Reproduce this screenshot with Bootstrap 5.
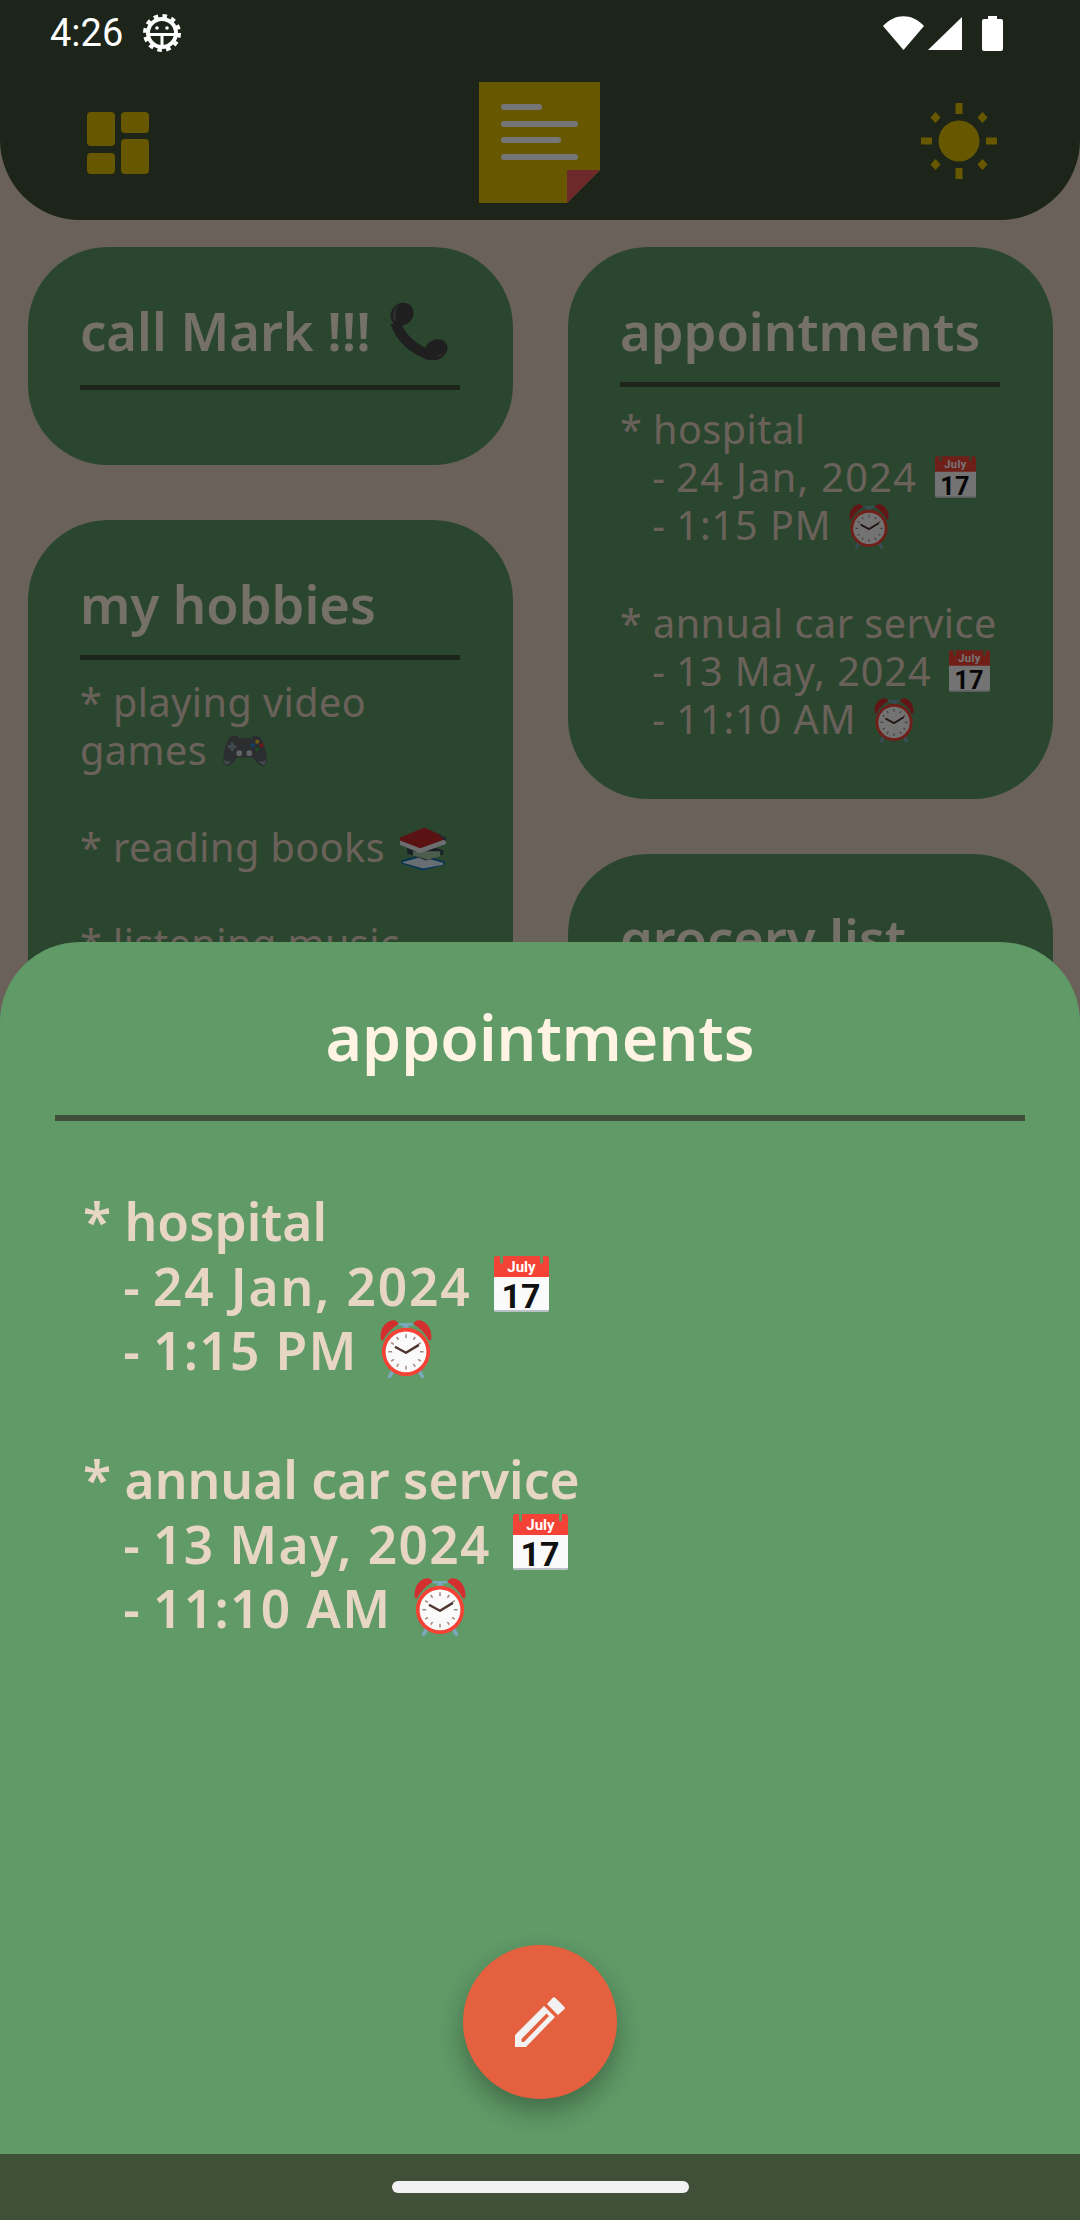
<!DOCTYPE html>
<html lang="en">
<head>
    <meta charset="UTF-8">
    <meta name="viewport" content="width=device-width, initial-scale=1.0">
    <title>Notes</title>
    <link href="https://cdn.jsdelivr.net/npm/bootstrap@5.3.0/dist/css/bootstrap.min.css" rel="stylesheet">
    <style>
        body {
            margin: 0;
            background-color: #e8d6c5;
            font-family: "Noto Sans", sans-serif;
        }
        .screen {
            width: 1080px;
            height: 2220px;
            overflow: hidden;
            background-color: #e8d6c5;
        }
        /* top bar */
        .app-bar {
            height: 220px;
            padding: 82px 83px 0 87px;
            background-color: #3f4f38;
            border-radius: 0 0 80px 80px;
        }
        .ico-grid { margin-top: 30px; }
        .ico-note { margin-left: 9px; }
        .ico-sun { margin-top: 21px; }
        .notes-area {
            padding: 27px 27px 0 28px;
            gap: 55px;
        }
        .notes-col {
            width: 485px;
            gap: 55px;
        }
        .note-tile {
            padding: 52px 53px 55px 52px;
            background-color: #5f9a67;
            border-radius: 80px;
            overflow: hidden;
        }
        .tile-short { height: 218px; }
        .tile-long { padding-bottom: 120px; }
        .note-title {
            height: 88px;
            margin: 0;
            font-size: 52.5px;
            font-weight: 600;
            line-height: 64px;
            color: #fff3e3;
            white-space: nowrap;
            border-bottom: 5px solid #3f4f38;
        }
        .title-tall { height: 91px; }
        .note-text {
            margin: 0;
            padding-top: 18px;
            font-size: 39.5px;
            line-height: 48.2px;
            letter-spacing: .5px;
            color: #e8d6c5;
            white-space: pre-wrap;
        }
        /* digits run wider in the original font */
        .note-text .wide { letter-spacing: 1px; }
        .note-text .wider { letter-spacing: 1.4px; }
        .moji {
            display: inline-block;
            margin: -24px 0 0 7px;
            vertical-align: -6px;
        }
        .moji-clock { vertical-align: -10px; }
        .moji-pad { vertical-align: -2px; margin-left: 4px; }
        .moji-books { vertical-align: -9px; margin-left: 4px; }
        .moji-phone { vertical-align: -11px; margin-left: 4px; }
        /* dim layer of the sheet */
        .scrim {
            background-color: rgba(0, 0, 0, .54);
        }
        .status-row {
            top: 0;
            left: 0;
            right: 0;
            height: 66px;
            padding: 0 77px 0 50px;
            color: #fff;
            font-family: Roboto, sans-serif;
            font-size: 38px;
        }
        .bug-ico { margin-left: 20px; }
        .batt-ico { margin-left: 20px; }
        .wifi-ico { margin-right: 4px; }
        .sheet {
            left: 0;
            right: 0;
            top: 942px;
            height: 1212px;
            padding: 0 55px;
            background-color: #5f9a67;
            border-radius: 80px 80px 0 0;
        }
        .sheet-title {
            height: 179px;
            margin: 0;
            padding-top: 55px;
            font-size: 62.5px;
            font-weight: 600;
            line-height: 80px;
            text-align: center;
            color: #fff3e3;
            border-bottom: 6px solid #3f4f38;
        }
        .sheet-text {
            margin: 0;
            padding: 68px 0 0 28px;
            font-size: 51.5px;
            font-weight: 600;
            line-height: 64.5px;
            color: #e8d6c5;
            white-space: pre-wrap;
        }
        .sheet-text .wide { letter-spacing: 1.3px; }
        .sheet-text .wider { letter-spacing: 1.8px; }
        .sheet-text .moji { margin-left: 9px; }
        .fab {
            left: 463px;
            top: 1945px;
            width: 154px;
            height: 154px;
            background-color: #e4603f;
            box-shadow: 0 12px 24px rgba(0, 0, 0, .3);
        }
        .nav-strip {
            left: 0;
            right: 0;
            bottom: 0;
            height: 66px;
            background-color: #3f4f38;
        }
        .nav-pill {
            width: 297px;
            height: 12px;
            background-color: #f2f2f2;
        }
    </style>
</head>
<body>
    <!-- emoji are not available as a font here so keep them as symbols -->
    <svg class="d-none">
        <symbol id="e-cal" viewBox="0 0 55 56">
            <path d="M3 0h49a3 3 0 0 1 3 3v19H0V3a3 3 0 0 1 3-3z" fill="#f44336"/>
            <path d="M0 21h55v32a3 3 0 0 1-3 3H3a3 3 0 0 1-3-3z" fill="#fafafa"/>
            <path d="M0 54h55a3 2 0 0 1-3 2H3a3 2 0 0 1-3-2z" fill="#b9c2c6"/>
            <path d="M6 0h3v6a1.500 1.500 0 0 1-3 0zM46 0h3v6a1.500 1.500 0 0 1-3 0z" fill="#5f9a67"/>
            <text x="27.500" y="16" text-anchor="middle" font-family="Roboto, sans-serif" font-size="15" font-weight="700" fill="#fff">July</text>
            <text x="27" y="52" text-anchor="middle" font-family="Roboto, sans-serif" font-size="34" font-weight="700" fill="#111">17</text>
        </symbol>
        <symbol id="e-clock" viewBox="0 0 56 64">
            <path d="M25 4h6v6h-6z" fill="#78a9bd"/>
            <path d="M20 3h16v2.500H20z" fill="#78a9bd"/>
            <path d="M1 21C-1 10 6 0 15 0c2 0 4 2 5 4C13 8 7 14 3 22z" fill="#d32f2f"/>
            <path d="M55 21C57 10 50 0 41 0c-2 0-4 2-5 4 7 4 13 10 17 18z" fill="#d32f2f"/>
            <path d="M12 53l-4 8 3 2 5-8zM44 53l4 8-3 2-5-8z" fill="#78a9bd"/>
            <circle cx="28" cy="34" r="26" fill="#f44336"/>
            <circle cx="28" cy="34" r="22" fill="#fafafa"/>
            <path d="M28 15v4M28 49v4M9 34h4M43 34h4M18 18l2 3M38 18l-2 3M12 24l3 2M44 24l-3 2M12 44l3-2M44 44l-3-2M18 50l2-3M38 50l-2-3" stroke="#a1887f" stroke-width="1.6"/>
            <path d="M17 29l11 6 13-8" fill="none" stroke="#4e342e" stroke-width="2.6" stroke-linecap="round" stroke-linejoin="round"/>
        </symbol>
        <symbol id="e-phone" viewBox="0 0 64 64">
            <path d="M7 22Q15 46 44 57" fill="none" stroke="#444" stroke-width="11"/>
            <ellipse cx="14" cy="13" rx="13" ry="11.500" transform="rotate(-45 14 13)" fill="#444"/>
            <ellipse cx="50" cy="51" rx="13" ry="10.500" transform="rotate(-30 50 51)" fill="#444"/>
            <path d="M5 20C3 13 5 6 10 3 7 8 6 14 8 20zM47 58c6 1 11-1 13-6-3 3-8 6-13 6z" fill="#666"/>
        </symbol>
        <symbol id="e-pad" viewBox="0 0 64 44">
            <path d="M15 1h6l2 3h18l2-3h6c6 1 9 8 12 22 2 10 2 18-3 20-5 1-10-5-15-12H21C16 38 11 44 6 43 1 41 1 33 3 23 6 9 9 2 15 1z" fill="#5f6368"/>
            <path d="M3 34c0 3 1 6 3 7 2 0 5-2 7-5-3 1-7 1-10-2zM61 34c0 3-1 6-3 7-2 0-5-2-7-5 3 1 7 1 10-2z" fill="#90a4ae"/>
            <path d="M12 10h4v4h4v4h-4v4h-4v-4H8v-4h4z" fill="#90a4ae"/>
            <circle cx="24" cy="25" r="4" fill="#cfd8dc"/>
            <circle cx="38" cy="25" r="4" fill="#cfd8dc"/>
            <circle cx="49" cy="9" r="2.800" fill="#fbc02d"/>
            <circle cx="55" cy="14" r="2.800" fill="#e53935"/>
            <circle cx="43" cy="14" r="2.800" fill="#1e88e5"/>
            <circle cx="49" cy="20" r="2.800" fill="#43a047"/>
        </symbol>
        <symbol id="e-books" viewBox="0 0 64 60">
            <path d="M2 46l28-8 32 9v5L32 60 2 50z" fill="#0d6fb8"/>
            <path d="M4 48l26-7 30 8v3L32 57 4 49z" fill="#e3f2fd"/>
            <path d="M10 28l22-6 28 10v6L36 46 10 36z" fill="#37474f"/>
            <path d="M18 33l38 0v7l-18 5-20-6z" fill="#a5c9a8"/>
            <path d="M0 14L34 0l30 14v7L28 34 0 22z" fill="#c62828"/>
            <path d="M0 18l28 11 36-13v7L28 36 0 24z" fill="#eceff1"/>
            <path d="M34 0l30 14v6L52 8z" fill="#455a64"/>
        </symbol>
    </svg>

    <div class="screen position-relative">
        <div class="app-bar d-flex justify-content-between align-items-start">
            <svg width="62" height="62" viewBox="0 0 62 62" class="ico-grid" fill="#e0c000">
                <rect x="0" y="0" width="28" height="34" rx="4"/>
                <rect x="34" y="0" width="28" height="21" rx="4"/>
                <rect x="0" y="41" width="28" height="21" rx="4"/>
                <rect x="34" y="27" width="28" height="35" rx="4"/>
            </svg>
            <svg width="121" height="121" viewBox="0 0 121 121" class="ico-note">
                <path d="M0 0h121v88l-33 33H0z" fill="#e0c000"/>
                <path d="M88 121V88h33z" fill="#ef5d5d"/>
                <g fill="#fff">
                    <rect x="22" y="22" width="41" height="6" rx="3"/>
                    <rect x="22" y="39" width="77" height="6" rx="3"/>
                    <rect x="22" y="55" width="60" height="6" rx="3"/>
                    <rect x="22" y="72" width="77" height="6" rx="3"/>
                </g>
            </svg>
            <svg width="76" height="76" viewBox="0 0 76 76" class="ico-sun" fill="#e0c000">
                <circle cx="38" cy="38" r="20.500"/>
                <rect x="34.500" y="0" width="7" height="11"/>
                <rect x="34.500" y="65" width="7" height="11"/>
                <rect x="0" y="34.500" width="11" height="7"/>
                <rect x="65" y="34.500" width="11" height="7"/>
                <path d="M14.500 9l5 5.500-5 5.500-5-5.500zM61.500 9l5 5.500-5 5.500-5-5.500zM14.500 56l5 5.500-5 5.500-5-5.500zM61.500 56l5 5.500-5 5.500-5-5.500z"/>
            </svg>
        </div>

        <div class="notes-area d-flex align-items-start">
            <div class="notes-col d-flex flex-column">
                <div class="note-tile tile-short">
                    <h2 class="note-title title-tall">call Mark !!! <svg class="moji moji-phone" width="60" height="60"><use href="#e-phone"/></svg></h2>
                </div>
                <div class="note-tile tile-long">
                    <h2 class="note-title">my hobbies</h2>
<p class="note-text">* playing video
games <svg class="moji moji-pad" width="46" height="32"><use href="#e-pad"/></svg>

* reading books <svg class="moji moji-books" width="46" height="44"><use href="#e-books"/></svg>

* listening music</p>
                </div>
            </div>
            <div class="notes-col d-flex flex-column">
                <div class="note-tile">
                    <h2 class="note-title">appointments</h2>
<p class="note-text">* hospital
   - <span class="wider">24 Jan, 2024</span> <svg class="moji" width="41" height="42"><use href="#e-cal"/></svg>
   - <span class="wide">1:15 PM</span> <svg class="moji moji-clock" width="40" height="46"><use href="#e-clock"/></svg>

* annual car service
   - <span class="wide">13 May, 2024</span> <svg class="moji" width="41" height="42"><use href="#e-cal"/></svg>
   - <span class="wide">11:10 AM</span> <svg class="moji moji-clock" width="40" height="46"><use href="#e-clock"/></svg></p>
                </div>
                <div class="note-tile tile-long">
                    <h2 class="note-title">grocery list</h2>
                </div>
            </div>
        </div>

        <div class="scrim position-absolute top-0 start-0 w-100 h-100"></div>

        <div class="status-row position-absolute d-flex justify-content-between align-items-center">
            <div class="d-flex align-items-center">
                <span>4:26</span>
                <svg width="38" height="38" viewBox="0 0 38 38" class="bug-ico">
                    <circle cx="19" cy="19" r="14" fill="none" stroke="#fff" stroke-width="4"/>
                    <circle cx="19" cy="19" r="17" fill="none" stroke="#fff" stroke-width="4" stroke-dasharray="4.500 4.400"/>
                    <path d="M6 20.500h26M19 20.500V33" fill="none" stroke="#fff" stroke-width="3"/>
                    <circle cx="14" cy="14" r="1.800" fill="#fff"/>
                    <circle cx="24" cy="14" r="1.800" fill="#fff"/>
                </svg>
            </div>
            <div class="d-flex align-items-center">
                <svg width="41" height="34" viewBox="0 0 41 34" class="wifi-ico"><path d="M20.500 34L0 10C12-3 29-3 41 10z" fill="#fff"/></svg>
                <svg width="34" height="33" viewBox="0 0 34 33"><path d="M34 0v33H0z" fill="#fff"/></svg>
                <svg width="21" height="35" viewBox="0 0 21 35" class="batt-ico"><path d="M6 0h9v3h4a2 2 0 0 1 2 2v28a2 2 0 0 1-2 2H2a2 2 0 0 1-2-2V5a2 2 0 0 1 2-2h4z" fill="#fff"/></svg>
            </div>
        </div>

        <div class="sheet position-absolute">
            <h1 class="sheet-title">appointments</h1>
<p class="sheet-text">* hospital
   - <span class="wider">24 Jan, 2024</span> <svg class="moji" width="55" height="56"><use href="#e-cal"/></svg>
   - <span class="wide">1:15 PM</span> <svg class="moji moji-clock" width="52" height="60"><use href="#e-clock"/></svg>

* annual car service
   - <span class="wide">13 May, 2024</span> <svg class="moji" width="55" height="56"><use href="#e-cal"/></svg>
   - <span class="wide">11:10 AM</span> <svg class="moji moji-clock" width="52" height="60"><use href="#e-clock"/></svg></p>
        </div>

        <button type="button" class="fab btn position-absolute rounded-circle border-0 p-0 d-flex align-items-center justify-content-center" aria-label="Edit">
            <svg width="50" height="50" viewBox="0 0 50 50"><path d="M0 50V38L29 9l11 11-29 30zM6.500 45h2.500L34 19l-2.500-2.500L6.500 42zM32 7l5.500-6a2 2 0 0 1 3 0l8.500 8.500a2 2 0 0 1 0 3l-6 5.500z" fill="#f2f2f2" fill-rule="evenodd"/></svg>
        </button>

        <div class="nav-strip position-absolute d-flex align-items-center justify-content-center">
            <div class="nav-pill rounded-pill"></div>
        </div>
    </div>

    <script src="https://cdn.jsdelivr.net/npm/bootstrap@5.3.0/dist/js/bootstrap.bundle.min.js"></script>
</body>
</html>
